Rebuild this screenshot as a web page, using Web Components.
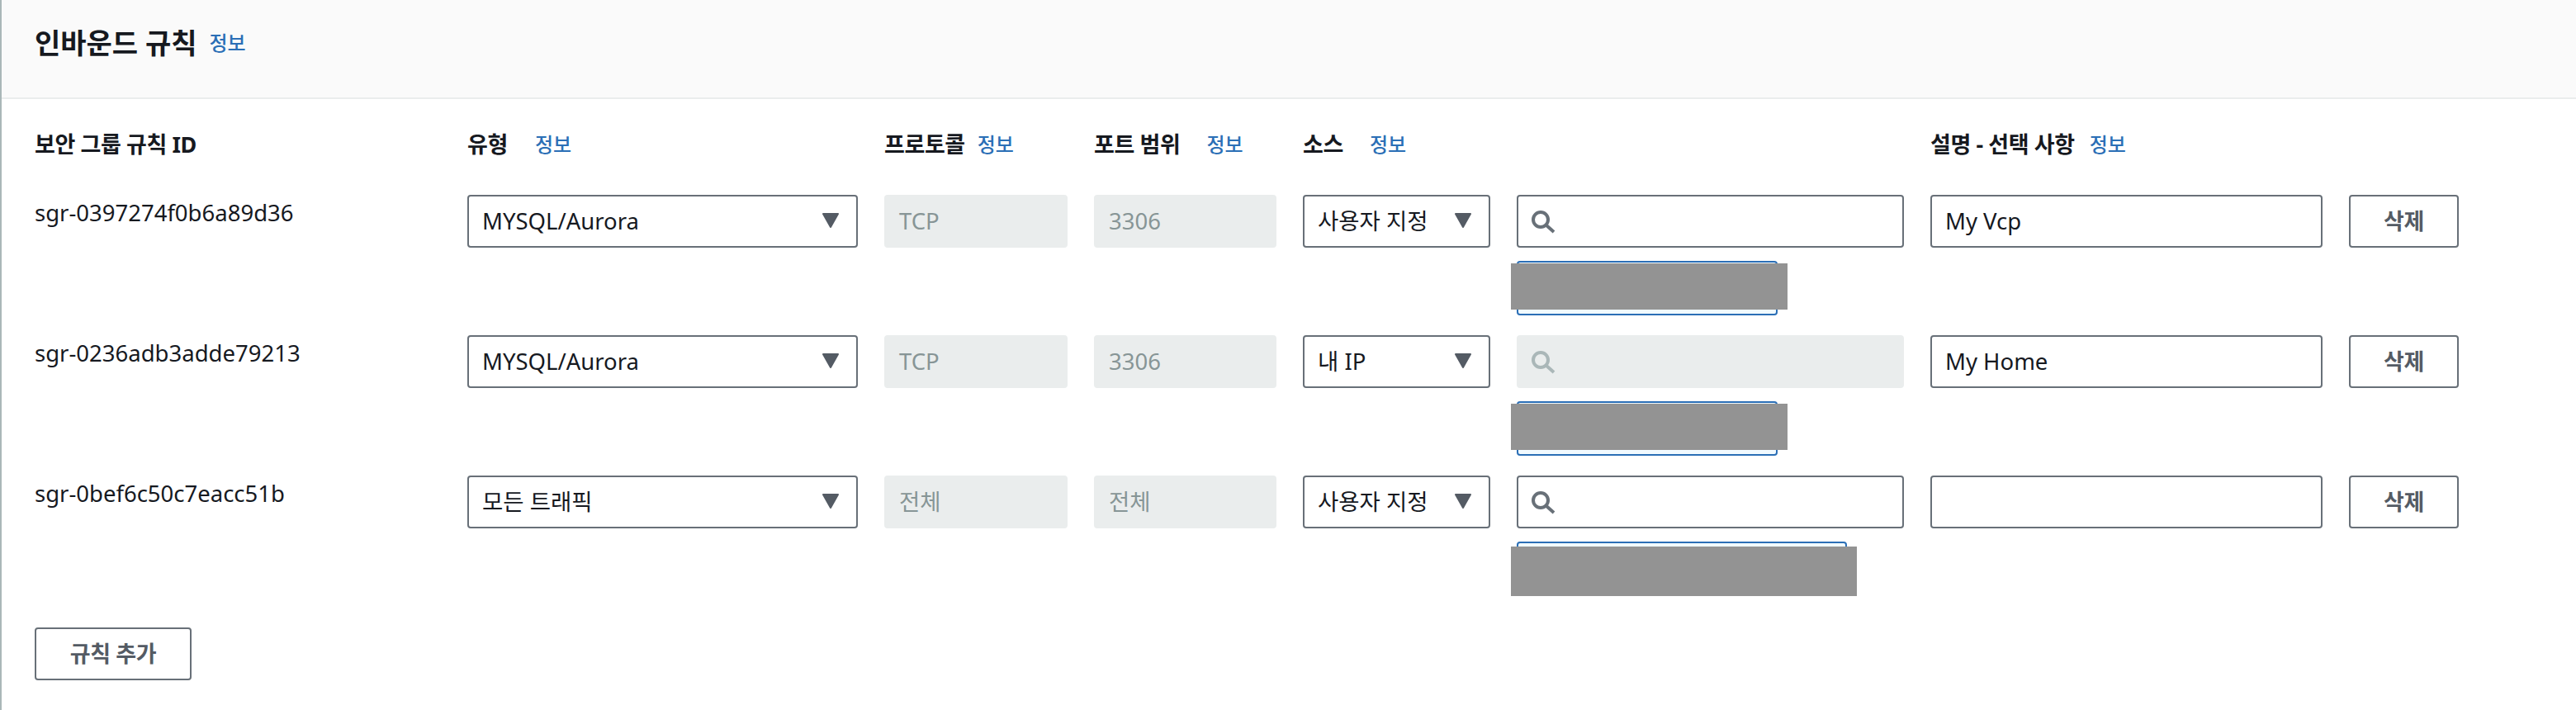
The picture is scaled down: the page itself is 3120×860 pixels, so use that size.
<!DOCTYPE html>
<html lang="ko">
<head>
<meta charset="utf-8">
<title>인바운드 규칙</title>
<style>
  html, body { margin: 0; background: #fff; }
  body { font: 27.5px/40px "Noto Sans", "Noto Sans CJK KR", sans-serif; color: #16191f; overflow: hidden; }
</style>
</head>
<body>
<rules-panel heading="인바운드 규칙">
  <rule-head>
    <col-label>보안 그룹 규칙 ID</col-label>
    <col-label info gap="33">유형</col-label>
    <col-label info gap="15">프로토콜</col-label>
    <col-label info gap="32">포트 범위</col-label>
    <col-label info gap="32">소스</col-label>
    <span></span>
    <col-label info gap="18">설명 - 선택 사항</col-label>
  </rule-head>

  <rule-row>
    <rule-id>sgr-0397274f0b6a89d36</rule-id>
    <sg-select>MYSQL/Aurora</sg-select>
    <sg-field disabled>TCP</sg-field>
    <sg-field disabled>3306</sg-field>
    <sg-select>사용자 지정</sg-select>
    <sg-search><sg-chip width="316"></sg-chip></sg-search>
    <sg-field>My Vcp</sg-field>
    <sg-button>삭제</sg-button>
  </rule-row>

  <rule-row>
    <rule-id>sgr-0236adb3adde79213</rule-id>
    <sg-select>MYSQL/Aurora</sg-select>
    <sg-field disabled>TCP</sg-field>
    <sg-field disabled>3306</sg-field>
    <sg-select>내 IP</sg-select>
    <sg-search disabled><sg-chip width="316"></sg-chip></sg-search>
    <sg-field>My Home</sg-field>
    <sg-button>삭제</sg-button>
  </rule-row>

  <rule-row>
    <rule-id>sgr-0bef6c50c7eacc51b</rule-id>
    <sg-select>모든 트래픽</sg-select>
    <sg-field disabled>전체</sg-field>
    <sg-field disabled>전체</sg-field>
    <sg-select>사용자 지정</sg-select>
    <sg-search><sg-chip width="400" tall></sg-chip></sg-search>
    <sg-field></sg-field>
    <sg-button>삭제</sg-button>
  </rule-row>

  <sg-button slot="footer" wide>규칙 추가</sg-button>
</rules-panel>

<script>
(function () {
  // Column widths are shared by the header row and the rule rows.
  const COLUMNS = '492px 473px 222px 221px 227px 469px 475px 133px';

  // Border and text colours of the form controls.
  const BOX = `
    display:flex; align-items:center; box-sizing:border-box; height:64px;
    border:2px solid #687078; border-radius:4px; background:#fff;`;

  function define(name, css, html, setup) {
    customElements.define(name, class extends HTMLElement {
      connectedCallback() {
        if (this.shadowRoot) return;
        const root = this.attachShadow({ mode: 'open' });
        root.innerHTML = `<style>${css}</style>${typeof html === 'function' ? html(this) : html}`;
        if (setup) setup(this, root);
      }
    });
  }

  define('info-link', `
    :host{ display:inline-block; color:#2b6fb6; font-size:24px; font-weight:500; line-height:40px; letter-spacing:0; }
  `, '<slot>정보</slot>');

  define('rules-panel', `
    :host{ display:block; box-sizing:border-box; min-height:860px; border-left:2px solid #aab7b8; }
    header{ display:flex; align-items:center; gap:15px; box-sizing:border-box; height:120px; padding:0 0 15px 40px;
            background:#fafafa; border-bottom:2px solid #eaeded; }
    h2{ margin:0; font-size:34px; line-height:44px; font-weight:700; }
    .body{ padding:34px 0 0 40px; }
    .footer{ padding:0 0 0 40px; margin-top:14px; }
  `, el => `
    <header><h2>${el.getAttribute('heading')}</h2><info-link></info-link></header>
    <div class="body"><slot></slot></div>
    <div class="footer"><slot name="footer"></slot></div>
  `);

  define('rule-head', `
    :host{ display:grid; grid-template-columns:${COLUMNS}; column-gap:32px; height:82px; align-items:start; }
  `, '<slot></slot>');

  define('rule-row', `
    :host{ display:grid; grid-template-columns:${COLUMNS}; column-gap:32px; height:170px; align-items:start; }
  `, '<slot></slot>');

  define('col-label', `
    :host{ display:flex; align-items:center; font-size:27px; font-weight:700; letter-spacing:-.4px; white-space:nowrap; height:42px; }
  `, el => `<slot></slot>${el.hasAttribute('info')
    ? `<info-link style="margin-left:${el.getAttribute('gap')}px"></info-link>` : ''}`);

  define('rule-id', `
    :host{ display:block; padding-top:2px; white-space:nowrap; }
  `, '<slot></slot>');

  define('sg-select', `
    :host{ ${BOX} justify-content:space-between; padding:0 20px 0 16px; white-space:nowrap; }
    svg{ flex:none; margin-top:-3px; }
  `, `<slot></slot>
    <svg width="22" height="18" viewBox="0 0 22 18"><path d="M2 1h18l-9 16z" fill="#545b64" stroke="#545b64" stroke-width="2" stroke-linejoin="round"/></svg>`);

  define('sg-field', `
    :host{ ${BOX} padding:0 16px; }
    :host([disabled]){ background:#eaeded; border-color:#eaeded; color:#879596; }
  `, '<slot></slot>');

  define('sg-search', `
    :host{ display:block; }
    .box{ ${BOX} padding:0 15px; }
    :host([disabled]) .box{ background:#eaeded; border-color:#eaeded; }
    svg{ flex:none; color:#687078; }
    :host([disabled]) svg{ color:#aab7b8; }
    ::slotted(sg-chip){ margin-top:16px; }
  `, `<div class="box">
      <svg width="32" height="32" viewBox="0 0 32 32" fill="none" stroke="currentColor" stroke-width="4">
        <circle cx="12" cy="14" r="9"/><path d="M18.5 20.5L28 29"/>
      </svg>
    </div><slot></slot>`);

  // Token under a source field; its value is blacked out in the reference.
  define('sg-chip', `
    :host{ display:block; position:relative; box-sizing:border-box; height:66px;
           border:2px solid #2b6fb6; border-radius:4px; background:#f1faff; }
    .mask{ position:absolute; left:-9px; right:-14px; top:1px; height:56px; background:#939393; }
    :host([tall]) .mask{ top:4px; height:60px; }
  `, '<div class="mask"></div>', el => { el.style.width = el.getAttribute('width') + 'px'; });

  define('sg-button', `
    :host{ ${BOX} justify-content:center; color:#545b64; font-size:27px; font-weight:700; letter-spacing:-.4px; white-space:nowrap; }
    :host([wide]){ width:190px; }
  `, '<slot></slot>');
})();
</script>
</body>
</html>
